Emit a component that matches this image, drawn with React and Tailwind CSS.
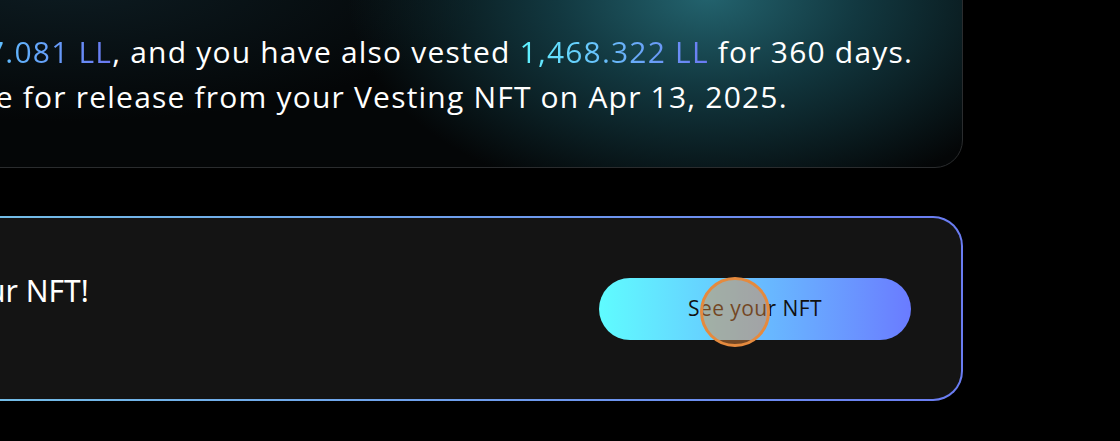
export default function App() {
  return (
    <div className="relative h-[441px] w-[1120px] overflow-hidden bg-black" style={{ fontFamily: '"Open Sans", "Noto Sans", sans-serif' }}>
      <div className="-ml-[53px] -mt-[60px] flex w-[1016px] flex-col gap-[48px]">
        {/* Vesting summary card */}
        <div className="rounded-[28px] border border-[#2a2c2e] bg-[#040607] bg-[radial-gradient(ellipse_360px_215px_at_760px_55px,#23636e_0%,#123840_42%,rgba(4,6,7,0)_100%),radial-gradient(ellipse_420px_140px_at_120px_40px,#0d1c22_0%,rgba(4,6,7,0)_100%)] pb-[48px] pl-[39px] pr-10 pt-[88px]">
          <p className="text-[30px] leading-[45px] tracking-[0.04em] text-white">
            <span className="block whitespace-nowrap">
              <span className="bg-gradient-to-r from-[#5cc4ff] to-[#6a78f2] bg-clip-text text-transparent">7.081 LL</span>
              , and you have also vested{' '}
              <span className="bg-gradient-to-r from-[#5ff4ff] to-[#6a78f2] bg-clip-text text-transparent">1,468.322 LL</span>{' '}
              for 360 days.
            </span>
            <span className="block whitespace-nowrap">le for release from your Vesting NFT on Apr 13, 2025.</span>
          </p>
        </div>

        {/* NFT card */}
        <div className="h-[185px] rounded-[30px] bg-gradient-to-r from-[#74c0e6] to-[#6a7cf2] p-[2px]">
          <div className="flex h-full items-start justify-between rounded-[28px] bg-[#141414] pl-[38px] pr-[50px]">
            <div className="mt-[55px] whitespace-nowrap text-[30px] leading-[36px] text-white" style={{ fontFamily: '"Noto Sans", sans-serif' }}>
              ur NFT!
            </div>
            <button className="relative mt-[60px] flex h-[62px] w-[312px] items-center justify-center rounded-full bg-gradient-to-r from-[#5ffcff] to-[#6a7bff] text-[21px] tracking-[0.02em] text-[#111]">
              See your NFT
              <span className="absolute left-[101px] top-[-1px] h-[70px] w-[70px] rounded-full border-[3px] border-[#e58a3e] bg-[#e8873a]/45" />
            </button>
          </div>
        </div>
      </div>
    </div>
  )
}
